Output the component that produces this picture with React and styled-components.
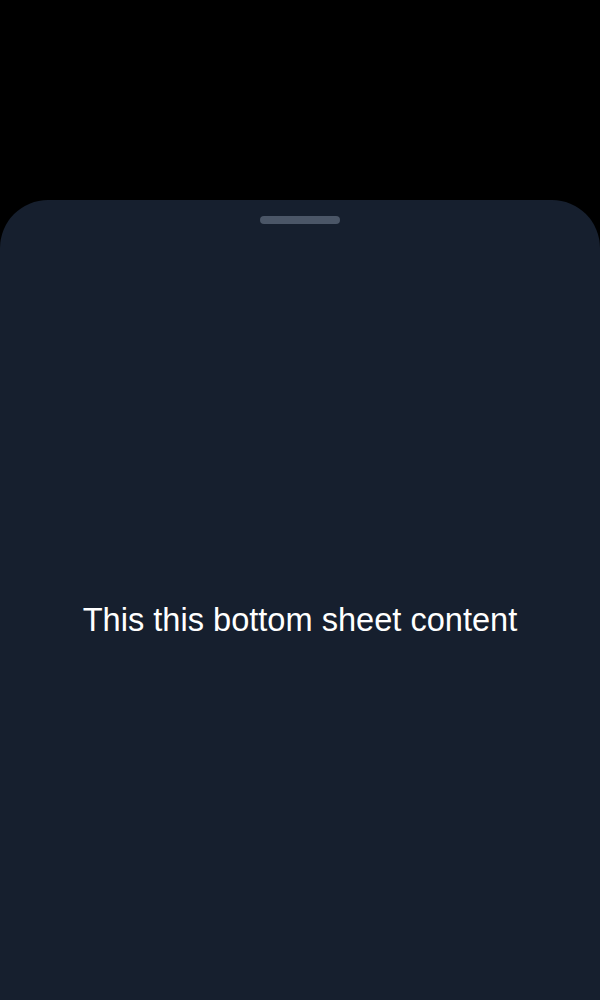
import React from 'react';
import styled, { createGlobalStyle } from 'styled-components';

const GlobalStyle = createGlobalStyle`
	html, body, #root {
		margin: 0;
		padding: 0;
		height: 100%;
		background: #000;
	}
	body {
		font-family: 'Liberation Sans', Arial, sans-serif;
	}
`;

const Screen = styled.div`
	height: 1000px;
	display: flex;
	flex-direction: column;
	justify-content: flex-end;
	background: #000;
`;

const Sheet = styled.div`
	height: 800px;
	display: flex;
	flex-direction: column;
	background: #161f2e;
	border-radius: 48px 48px 0 0;
	overflow: hidden;
`;

const HandleArea = styled.div`
	height: 40px;
	display: flex;
	justify-content: center;
	padding-top: 16px;
	box-sizing: border-box;
`;

const Handle = styled.div`
	width: 80px;
	height: 8px;
	border-radius: 4px;
	background: #4b5667;
`;

const Content = styled.div`
	flex: 1;
	display: flex;
	align-items: center;
	justify-content: center;
	color: #fff;
	font-size: 32.6px;
`;

export default function App() {
	return (
		<>
			<GlobalStyle />
			<Screen>
				<Sheet>
					<HandleArea>
						<Handle />
					</HandleArea>
					<Content>This this bottom sheet content</Content>
				</Sheet>
			</Screen>
		</>
	);
}
